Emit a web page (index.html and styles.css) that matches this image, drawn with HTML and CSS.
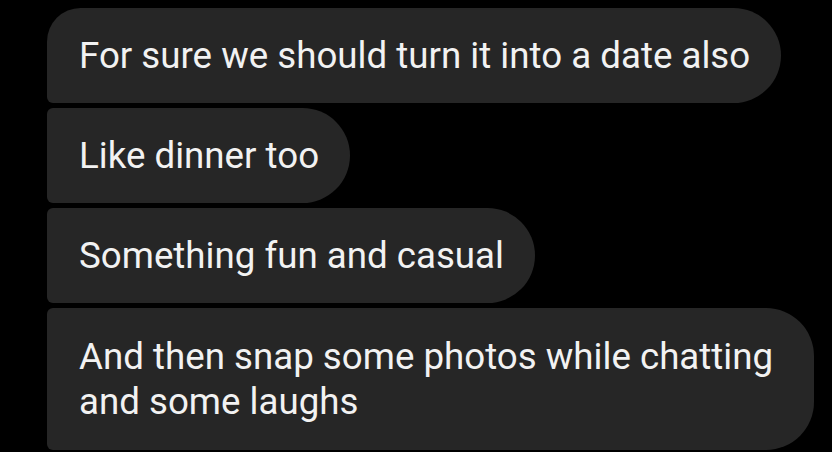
FILE: index.html
```html
<!DOCTYPE html>
<html>
<head>
<meta charset="utf-8">
<link rel="stylesheet" href="styles.css">
</head>
<body>
<div class="thread">
  <div class="bubble first">For sure we should turn it into a date also</div>
  <div class="bubble mid">Like dinner too</div>
  <div class="bubble mid">Something fun and casual</div>
  <div class="bubble last">And then snap some photos while chatting and some laughs</div>
</div>
</body>
</html>
```
FILE: styles.css
```css
html, body {
  margin: 0;
  padding: 0;
  background: #000;
  width: 832px;
  height: 452px;
  overflow: hidden;
}
.thread {
  display: flex;
  flex-direction: column;
  align-items: flex-start;
  gap: 5px;
  padding: 8px 0 0 47px;
}
.bubble {
  box-sizing: border-box;
  max-width: 767px;
  background: #262626;
  color: #f2f2f2;
  font-family: Roboto, "Noto Sans", sans-serif;
  font-size: 36.7px;
  line-height: 45px;
  padding: 25px 31px 25px 32px;
  border-radius: 6px 48px 48px 6px;
}
.bubble.first {
  border-top-left-radius: 34px;
}
.bubble.last {
  padding-top: 26px;
  padding-bottom: 26px;
}
```
